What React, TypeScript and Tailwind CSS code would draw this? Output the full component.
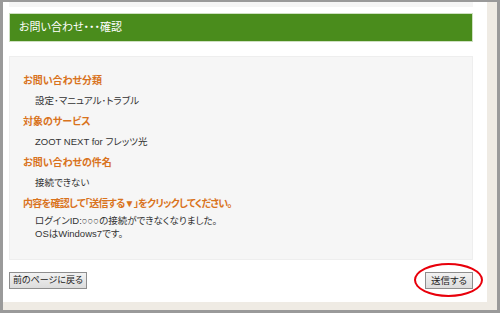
import React from "react"

const font = { fontFamily: '"Liberation Sans", "Noto Sans CJK JP", sans-serif' }

function Row({ label, tight, children }: { label: string; tight?: boolean; children: React.ReactNode }) {
  return (
    <div>
      <div className={`text-[10px] leading-[20px] font-bold text-[#d9731d] ${tight ? "tracking-[-0.7px]" : ""}`}>{label}</div>
      {children}
    </div>
  )
}

export default function App() {
  return (
    <div
      className="w-[500px] h-[313px] bg-[#9a9a9a] pt-[2px] px-[3px] pb-[3px] [font-feature-settings:'palt']"
      style={font}
    >
      <div className="h-full bg-[#efebe4] pr-[10px] pb-[8px]">
        <div className="h-full bg-white pl-[6px] pr-[14px] flex flex-col">
          {/* bottom edge of previous block */}
          <div className="h-[5px] bg-[#f5f5f5]"></div>

          {/* title bar */}
          <div className="mt-[6px] h-[29px] bg-[#4a8c1c] border border-[#cfe0c2] flex items-center pl-[9px]">
            <span className="text-white text-[11px]">お問い合わせ・・・確認</span>
          </div>

          {/* confirmation box */}
          <div className="mt-[14px] h-[204px] bg-[#f6f6f6] border border-[#eeeeee] pt-[14px] pl-[13px] flex flex-col gap-[1px]">
            <Row label="お問い合わせ分類">
              <div className="pl-[12px] text-[9.5px] leading-[20px] text-[#333]">設定･マニュアル･トラブル</div>
            </Row>
            <Row label="対象のサービス">
              <div className="pl-[12px] text-[9.5px] leading-[20px] text-[#333]">ZOOT NEXT for フレッツ光</div>
            </Row>
            <Row label="お問い合わせの件名">
              <div className="pl-[12px] text-[9.5px] leading-[20px] text-[#333]">接続できない</div>
            </Row>
            <Row label="内容を確認して「送信する▼」をクリックしてください。" tight>
              <div className="pl-[12px] text-[9.5px] leading-[13px] text-[#333]">
                <div>ログインID:○○○の接続ができなくなりました。</div>
                <div>OSはWindows7です。</div>
              </div>
            </Row>
          </div>

          {/* buttons */}
          <div className="mt-[12px] flex justify-between items-start">
            <button className="w-[78px] h-[17px] border border-[#8e8e8e] bg-gradient-to-b from-[#f2f2f2] to-[#dcdcdc] text-[9px] leading-none text-[#222] whitespace-nowrap flex items-center justify-center">
              前のページに戻る
            </button>
            <div className="relative">
              <button className="w-[48px] h-[17px] border border-[#8e8e8e] bg-gradient-to-b from-[#f2f2f2] to-[#dcdcdc] text-[9.5px] leading-none text-[#222] whitespace-nowrap flex items-center justify-center">
                送信する
              </button>
              <div className="absolute left-[-11px] right-[-10px] top-[-9px] bottom-[-8px] border-2 border-[#e8000b] rounded-[50%] pointer-events-none"></div>
            </div>
          </div>
        </div>
      </div>
    </div>
  )
}
